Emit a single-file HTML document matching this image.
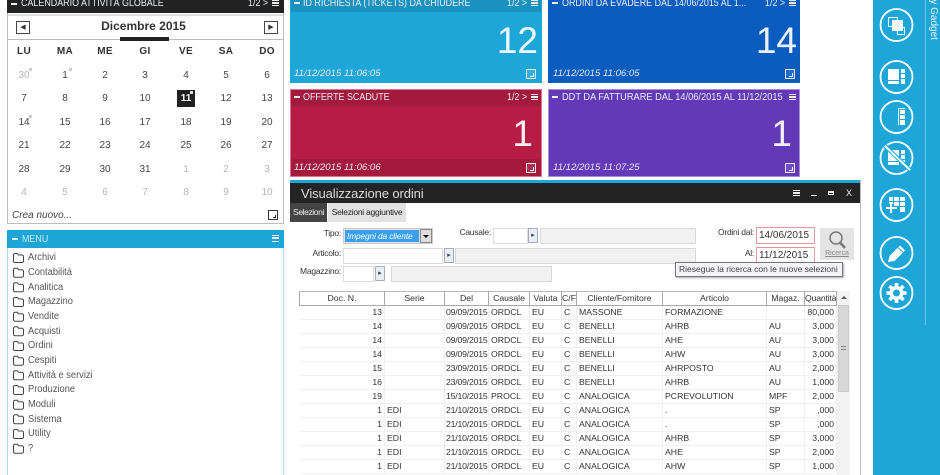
<!DOCTYPE html>
<html><head><meta charset="utf-8"><style>
html,body{margin:0;padding:0;width:940px;height:475px;overflow:hidden;background:#fff;font-family:"Liberation Sans",sans-serif;color:#333}
div,span{position:absolute;box-sizing:border-box;white-space:nowrap}
#root{left:0;top:0;width:940px;height:475px;overflow:hidden;background:#fff}
.h{font-size:10.5px;color:#e6eef5;line-height:12px;transform:scaleX(.85);transform-origin:0 50%}
.m{width:6px;height:2px;background:#eee}
.ham{width:7px;height:6px;border-top:1px solid #eee;border-bottom:1px solid #eee;background:linear-gradient(#eee,#eee) 0 1px/7px 2px no-repeat}
.ts{font-size:9.6px;font-style:italic;color:#e4e9f2;line-height:12px}
.num{font-size:37px;color:rgba(255,255,255,.92);line-height:40px;text-align:right;font-weight:400}
.exp{width:10px;height:10px;border:1px solid #e8e8e8;background:rgba(255,255,255,.1)}
.exp:after{content:"";position:absolute;right:1px;bottom:1px;width:3px;height:3px;border-right:1px solid #fff;border-bottom:1px solid #fff}
.dw{font-size:10px;font-weight:bold;color:#333;width:30px;text-align:center;top:46px;line-height:12px;letter-spacing:.3px}
.d{font-size:10px;color:#444;width:30px;text-align:center;line-height:12px}
.g{color:#b5b5b5}
.mi{left:28px;font-size:10px;line-height:12px;color:#555;transform:scaleX(.93);transform-origin:0 50%}
.lb{font-size:8.5px;line-height:11px;color:#333;text-align:right;letter-spacing:-.25px}
.in{background:#fff;border:1px solid #dcdcdc;height:16px}
.ro{background:#f1f1f1;border:1px solid #d8d8d8;height:16px}
.ar{width:10px;height:15px;background:#e8eef6;border:1px solid #aab;font-size:7px;line-height:13px;text-align:center;color:#345}
table{position:absolute;left:299px;top:291px;border-collapse:collapse;table-layout:fixed;width:537px;font-size:8.7px;color:#333}
th{font-weight:normal;height:13px;padding:0;border:1px solid #aaa;border-top:1px solid #bbb;background:#fff;text-align:center;line-height:11px;overflow:hidden;white-space:nowrap}
th:last-child{letter-spacing:-.2px}
td{height:13px;padding:0 2px;border-bottom:1px solid #f0f0f0;border-right:1px solid #f0f0f0;line-height:11px;overflow:hidden;white-space:nowrap}
td:nth-child(3){padding:0 0 0 1px;letter-spacing:-.2px}
td.r{text-align:right}
svg{position:absolute}
</style></head><body><div id="root">

<!-- calendar -->
<div style="left:7px;top:0;width:277px;height:224px;border:1px solid #bdbdbd;background:#fff"></div>
<div style="left:7px;top:0;width:277px;height:13px;background:#222"></div>
<div style="left:8px;top:14px;width:275px;height:2px;background:#ddd"></div>
<div class="m" style="left:11px;top:3px"></div>
<div class="h" style="left:21px;top:-3px">CALENDARIO ATTIVITÀ GLOBALE</div>
<div class="h" style="left:248px;top:-3px">1/2 &gt;</div>
<div class="ham" style="left:272px;top:0"></div>
<div style="left:16px;top:21px;width:14px;height:13px;border:1px solid #444;font-size:7px;line-height:11px;text-align:center">◀</div>
<div style="left:264px;top:21px;width:14px;height:13px;border:1px solid #444;font-size:7px;line-height:11px;text-align:center">▶</div>
<div style="left:90px;top:19px;width:107px;text-align:center;font-size:12px;font-weight:bold;color:#333;line-height:15px">Dicembre 2015</div>
<div style="left:8px;top:39px;width:275px;height:1px;background:#bbb"></div>
<div style="left:120px;top:37px;width:49px;height:4px;background:#222"></div>

<div class="dw" style="left:9px">LU</div><div class="dw" style="left:50px">MA</div><div class="dw" style="left:90px">ME</div><div class="dw" style="left:130px">GI</div><div class="dw" style="left:171px">VE</div><div class="dw" style="left:211px">SA</div><div class="dw" style="left:252px">DO</div>

<div class="d g" style="left:9px;top:70px">30</div><div class="d" style="left:50px;top:70px">1</div><div class="d" style="left:90px;top:70px">2</div><div class="d" style="left:130px;top:70px">3</div><div class="d" style="left:171px;top:70px">4</div><div class="d" style="left:211px;top:70px">5</div><div class="d" style="left:252px;top:70px">6</div>
<div style="left:29px;top:68px;width:3px;height:3px;background:#ccc"></div>
<div style="left:69px;top:68px;width:3px;height:3px;background:#ccc"></div>

<div class="d" style="left:9px;top:93px">7</div><div class="d" style="left:50px;top:93px">8</div><div class="d" style="left:90px;top:93px">9</div><div class="d" style="left:130px;top:93px">10</div>
<div style="left:177px;top:90px;width:18px;height:17px;background:#222"></div>
<div class="d" style="left:171px;top:93px;color:#fff;font-weight:bold">11</div>
<div style="left:190px;top:91px;width:3px;height:3px;background:#ddd"></div>
<div class="d" style="left:211px;top:93px">12</div><div class="d" style="left:252px;top:93px">13</div>

<div class="d" style="left:9px;top:117px">14</div><div class="d" style="left:50px;top:117px">15</div><div class="d" style="left:90px;top:117px">16</div><div class="d" style="left:130px;top:117px">17</div><div class="d" style="left:171px;top:117px">18</div><div class="d" style="left:211px;top:117px">19</div><div class="d" style="left:252px;top:117px">20</div>
<div style="left:29px;top:115px;width:3px;height:3px;background:#ccc"></div>

<div class="d" style="left:9px;top:140px">21</div><div class="d" style="left:50px;top:140px">22</div><div class="d" style="left:90px;top:140px">23</div><div class="d" style="left:130px;top:140px">24</div><div class="d" style="left:171px;top:140px">25</div><div class="d" style="left:211px;top:140px">26</div><div class="d" style="left:252px;top:140px">27</div>

<div class="d" style="left:9px;top:164px">28</div><div class="d" style="left:50px;top:164px">29</div><div class="d" style="left:90px;top:164px">30</div><div class="d" style="left:130px;top:164px">31</div><div class="d g" style="left:171px;top:164px">1</div><div class="d g" style="left:211px;top:164px">2</div><div class="d g" style="left:252px;top:164px">3</div>

<div class="d g" style="left:9px;top:187px">4</div><div class="d g" style="left:50px;top:187px">5</div><div class="d g" style="left:90px;top:187px">6</div><div class="d g" style="left:130px;top:187px">7</div><div class="d g" style="left:171px;top:187px">8</div><div class="d g" style="left:211px;top:187px">9</div><div class="d g" style="left:252px;top:187px">10</div>

<div style="left:12px;top:210px;font-size:10px;font-style:italic;color:#444;line-height:12px">Crea nuovo...</div>
<div style="left:268px;top:210px;width:10px;height:10px;border:1px solid #333"><div style="right:1px;bottom:1px;width:3px;height:3px;border-right:1px solid #222;border-bottom:1px solid #222"></div></div>

<!-- menu -->
<div style="left:7px;top:230px;width:277px;height:245px;border:1px solid #a9dcef;border-bottom:0;background:#fff"></div>
<div style="left:7px;top:230px;width:277px;height:18px;background:#1da5d8"></div>
<div class="m" style="left:12px;top:238px"></div>
<div class="h" style="left:22px;top:233px;color:#c6e8f5">MENU</div>
<div class="ham" style="left:272px;top:235px;height:7px"></div>

<svg style="left:12px;top:252px" width="14" height="215" fill="none" stroke="#444" stroke-width="1">
<defs><path id="f" d="M1.5 9.5V2.5L2.5 1.5H5.5L6.5 3H10.5L11.5 4V9.5L10.5 10.5H2.5Z"/></defs>
<use href="#f" y="0"/><use href="#f" y="14.7"/><use href="#f" y="29.3"/><use href="#f" y="44"/><use href="#f" y="58.7"/><use href="#f" y="73.3"/><use href="#f" y="88"/><use href="#f" y="102.7"/><use href="#f" y="117.3"/><use href="#f" y="132"/><use href="#f" y="146.7"/><use href="#f" y="161.3"/><use href="#f" y="176"/><use href="#f" y="190.7"/>
</svg>
<div class="mi" style="top:252px">Archivi</div>
<div class="mi" style="top:267px">Contabilità</div>
<div class="mi" style="top:282px">Analitica</div>
<div class="mi" style="top:296px">Magazzino</div>
<div class="mi" style="top:311px">Vendite</div>
<div class="mi" style="top:326px">Acquisti</div>
<div class="mi" style="top:340px">Ordini</div>
<div class="mi" style="top:355px">Cespiti</div>
<div class="mi" style="top:370px">Attività e servizi</div>
<div class="mi" style="top:384px">Produzione</div>
<div class="mi" style="top:399px">Moduli</div>
<div class="mi" style="top:414px">Sistema</div>
<div class="mi" style="top:428px">Utility</div>
<div class="mi" style="top:443px">?</div>

<!-- tiles -->
<div style="left:290px;top:0;width:252px;height:83px;background:#1fa6d9"></div>
<div style="left:291px;top:0;width:250px;height:12px;background:#1b91bf"></div>
<div class="m" style="left:294px;top:2px"></div>
<div class="h" style="left:303px;top:-3px">ID RICHIESTA (TICKETS) DA CHIUDERE</div>
<div class="h" style="left:507px;top:-3px">1/2 &gt;</div>
<div class="ham" style="left:531px;top:0"></div>
<div class="num" style="left:440px;top:21px;width:98px">12</div>
<div class="ts" style="left:294px;top:68px">11/12/2015 11:06:05</div>
<div class="exp" style="left:526px;top:69px"></div>

<div style="left:548px;top:0;width:252px;height:83px;background:#0a5cbf"></div>
<div class="m" style="left:552px;top:2px"></div>
<div class="h" style="left:562px;top:-3px">ORDINI DA EVADERE DAL 14/06/2015 AL 1...</div>
<div class="h" style="left:765px;top:-3px">1/2 &gt;</div>
<div class="ham" style="left:789px;top:0"></div>
<div class="num" style="left:698px;top:21px;width:99px">14</div>
<div class="ts" style="left:553px;top:68px">11/12/2015 11:06:05</div>
<div class="exp" style="left:785px;top:69px"></div>

<div style="left:290px;top:89px;width:252px;height:88px;background:#b71c44;border:1px solid #d8769a"></div>
<div style="left:291px;top:90px;width:250px;height:16px;background:#a31a3d"></div>
<div style="left:291px;top:159px;width:250px;height:17px;background:#a31a3d"></div>
<div class="m" style="left:294px;top:96px"></div>
<div class="h" style="left:303px;top:91px">OFFERTE SCADUTE</div>
<div class="h" style="left:507px;top:91px">1/2 &gt;</div>
<div class="ham" style="left:531px;top:94px"></div>
<div class="num" style="left:435px;top:114px;width:98px">1</div>
<div class="ts" style="left:294px;top:162px">11/12/2015 11:06:06</div>
<div class="exp" style="left:526px;top:163px"></div>

<div style="left:548px;top:89px;width:252px;height:88px;background:#6339b8;border:1px solid #a58fd8"></div>
<div class="m" style="left:552px;top:96px"></div>
<div class="h" style="left:562px;top:91px;transform:scaleX(.88)">DDT DA FATTURARE DAL 14/06/2015 AL 11/12/2015</div>
<div class="ham" style="left:789px;top:94px"></div>
<div class="num" style="left:696px;top:114px;width:96px">1</div>
<div class="ts" style="left:553px;top:162px">11/12/2015 11:07:25</div>
<div class="exp" style="left:785px;top:163px"></div>

<!-- window -->
<div style="left:290px;top:180px;width:571px;height:295px;background:#fff;border-right:1px solid #bbb"></div>
<div style="left:290px;top:180px;width:570px;height:3px;background:#1fa6d9"></div>
<div style="left:290px;top:183px;width:570px;height:20px;background:#242424"></div>
<div style="left:301px;top:185px;font-size:13px;color:#ddd;line-height:17px;letter-spacing:-.1px">Visualizzazione ordini</div>
<div class="ham" style="left:793px;top:190px"></div>
<div style="left:811px;top:195px;width:6px;height:1px;background:#eee"></div>
<div style="left:828px;top:191px;width:6px;height:4px;border:1px solid #eee;border-top-width:2px"></div>
<div style="left:846px;top:187px;font-size:9px;color:#eee;line-height:12px">X</div>

<div style="left:290px;top:203px;width:37px;height:19px;background:#444;color:#eee;font-size:8.5px;line-height:19px;text-align:center;letter-spacing:-.4px">Selezioni</div>
<div style="left:328px;top:203px;width:78px;height:19px;background:#e2e2e2;color:#222;font-size:8.5px;line-height:19px;text-align:center;letter-spacing:-.25px">Selezioni aggiuntive</div>

<div class="lb" style="left:300px;top:228px;width:41px">Tipo:</div>
<div style="left:343px;top:228px;width:90px;height:16px;background:#e4e4e4;border:1px solid #ccc"></div>
<div style="left:345px;top:230px;width:74px;height:12px;background:#3a9ff0;color:#fff;font-size:8.3px;font-style:italic;line-height:12px;padding-left:2px;letter-spacing:-.1px">Impegni da cliente</div>
<div style="left:420px;top:229px;width:12px;height:14px;background:#ddd;border:1px solid #888"></div>
<div style="left:423px;top:235px;width:0;height:0;border:3px solid transparent;border-top:3px solid #111;border-bottom:0"></div>

<div class="lb" style="left:450px;top:227px;width:41px">Causale:</div>
<div class="in" style="left:493px;top:228px;width:35px"></div>
<div class="ar" style="left:528px;top:228px">▸</div>
<div class="ro" style="left:540px;top:228px;width:156px"></div>

<div class="lb" style="left:300px;top:248px;width:41px">Articolo:</div>
<div class="in" style="left:343px;top:248px;width:100px"></div>
<div class="ar" style="left:444px;top:248px">▸</div>
<div class="ro" style="left:455px;top:248px;width:241px"></div>

<div class="lb" style="left:295px;top:266px;width:46px">Magazzino:</div>
<div class="in" style="left:343px;top:266px;width:31px"></div>
<div class="ar" style="left:375px;top:266px">▸</div>
<div class="ro" style="left:391px;top:266px;width:161px"></div>

<div class="lb" style="left:700px;top:227px;width:54px">Ordini dal:</div>
<div style="left:756px;top:227px;width:59px;height:17px;border:1px solid #e39a9a;font-size:10px;line-height:15px;padding-left:2px;color:#333">14/06/2015</div>
<div class="lb" style="left:700px;top:248px;width:54px">Al:</div>
<div style="left:756px;top:247px;width:59px;height:17px;border:1px solid #e39a9a;font-size:10px;line-height:15px;padding-left:2px;color:#333">11/12/2015</div>

<div style="left:820px;top:228px;width:34px;height:32px;background:#e4e4e4"></div>
<svg style="left:827px;top:230px" width="20" height="20" fill="none" stroke="#777"><circle cx="9" cy="8" r="6" stroke-width="1.5"/><path d="M13 12.5L18 18" stroke-width="2.5"/></svg>
<div style="left:820px;top:249px;width:34px;text-align:center;font-size:7px;color:#888;line-height:10px;text-decoration:underline">Ricerca</div>

<div style="left:675px;top:262px;width:168px;height:15px;background:#f4f4f8;border:1px solid #777;box-shadow:1px 1px 2px #aaa;font-size:8.5px;line-height:13px;color:#444;padding-left:3px">Riesegue la ricerca con le nuove selezioni</div>

<!-- grid -->
<table><colgroup><col style="width:85px"><col style="width:60px"><col style="width:44px"><col style="width:41px"><col style="width:32px"><col style="width:15px"><col style="width:86px"><col style="width:104px"><col style="width:38px"><col style="width:32px"></colgroup>
<tr><th>Doc. N.</th><th>Serie</th><th>Del</th><th>Causale</th><th>Valuta</th><th>C/F</th><th>Cliente/Fornitore</th><th>Articolo</th><th>Magaz.</th><th>Quantità</th></tr>
<tr><td class="r">13</td><td></td><td>09/09/2015</td><td>ORDCL</td><td>EU</td><td>C</td><td>MASSONE</td><td>FORMAZIONE</td><td></td><td class="r">80,000</td></tr>
<tr><td class="r">14</td><td></td><td>09/09/2015</td><td>ORDCL</td><td>EU</td><td>C</td><td>BENELLI</td><td>AHRB</td><td>AU</td><td class="r">3,000</td></tr>
<tr><td class="r">14</td><td></td><td>09/09/2015</td><td>ORDCL</td><td>EU</td><td>C</td><td>BENELLI</td><td>AHE</td><td>AU</td><td class="r">3,000</td></tr>
<tr><td class="r">14</td><td></td><td>09/09/2015</td><td>ORDCL</td><td>EU</td><td>C</td><td>BENELLI</td><td>AHW</td><td>AU</td><td class="r">3,000</td></tr>
<tr><td class="r">15</td><td></td><td>23/09/2015</td><td>ORDCL</td><td>EU</td><td>C</td><td>BENELLI</td><td>AHRPOSTO</td><td>AU</td><td class="r">2,000</td></tr>
<tr><td class="r">16</td><td></td><td>23/09/2015</td><td>ORDCL</td><td>EU</td><td>C</td><td>BENELLI</td><td>AHRB</td><td>AU</td><td class="r">1,000</td></tr>
<tr><td class="r">19</td><td></td><td>15/10/2015</td><td>PROCL</td><td>EU</td><td>C</td><td>ANALOGICA</td><td>PCREVOLUTION</td><td>MPF</td><td class="r">2,000</td></tr>
<tr><td class="r">1</td><td>EDI</td><td>21/10/2015</td><td>ORDCL</td><td>EU</td><td>C</td><td>ANALOGICA</td><td>.</td><td>SP</td><td class="r">,000</td></tr>
<tr><td class="r">1</td><td>EDI</td><td>21/10/2015</td><td>ORDCL</td><td>EU</td><td>C</td><td>ANALOGICA</td><td>.</td><td>SP</td><td class="r">,000</td></tr>
<tr><td class="r">1</td><td>EDI</td><td>21/10/2015</td><td>ORDCL</td><td>EU</td><td>C</td><td>ANALOGICA</td><td>AHRB</td><td>SP</td><td class="r">3,000</td></tr>
<tr><td class="r">1</td><td>EDI</td><td>21/10/2015</td><td>ORDCL</td><td>EU</td><td>C</td><td>ANALOGICA</td><td>AHE</td><td>SP</td><td class="r">2,000</td></tr>
<tr><td class="r">1</td><td>EDI</td><td>21/10/2015</td><td>ORDCL</td><td>EU</td><td>C</td><td>ANALOGICA</td><td>AHW</td><td>SP</td><td class="r">1,000</td></tr>
</table>
<div style="left:837px;top:291px;width:13px;height:184px;background:#f3f3f3"></div>
<div style="left:838px;top:305px;width:11px;height:87px;background:#d8d8d8;border:1px solid #ccc"></div>
<div style="left:841px;top:346px;width:5px;height:4px;border-top:1px solid #888;border-bottom:1px solid #888"></div>
<div style="left:841px;top:296px;width:0;height:0;border:3px solid transparent;border-bottom:3px solid #555;border-top:0"></div>

<!-- sidebar -->
<div style="left:873px;top:0;width:67px;height:475px;background:#1fa6d9"></div>
<div style="left:925px;top:0;width:1px;height:325px;background:#6cc4e6"></div>
<div style="left:927px;top:-21px;font-size:10px;line-height:12px;color:#e8f5fb;transform:rotate(90deg);transform-origin:0 100%;">My Gadget</div>
<svg style="left:873px;top:0" width="50" height="320" fill="none" stroke="#fff" stroke-width="1.8">
<circle cx="23.5" cy="25" r="16"/><circle cx="23.5" cy="77" r="16"/><circle cx="23.5" cy="117" r="16"/><circle cx="23.5" cy="158" r="16"/><circle cx="23.5" cy="205" r="16"/><circle cx="23.5" cy="253" r="16"/><circle cx="23.5" cy="293" r="16"/>
<!-- icon 1: stacked squares -->
<rect x="15.5" y="17.5" width="9" height="9" stroke-width="1"/><rect x="24.5" y="27.5" width="7" height="7" stroke-width="1"/><rect x="19" y="20" width="11" height="11" fill="#fff" stroke="none"/>
<!-- icon 2: grid with large tile -->
<g fill="#fff" stroke="none"><rect x="15" y="69" width="11" height="11"/><rect x="15" y="81" width="11" height="3"/><rect x="28" y="69" width="4" height="4"/><rect x="28" y="74" width="4" height="4"/><rect x="28" y="79" width="4" height="5"/></g>
<!-- icon 3: column -->
<g fill="#fff" stroke="none"><rect x="25" y="108" width="1" height="17"/><rect x="25" y="108" width="7" height="1"/><rect x="27" y="110" width="5" height="4"/><rect x="27" y="115" width="5" height="4"/><rect x="27" y="120" width="5" height="5"/></g>
<!-- icon 4: grid crossed -->
<g fill="#fff" stroke="none"><rect x="15" y="150" width="11" height="11"/><rect x="15" y="162" width="11" height="3"/><rect x="28" y="150" width="4" height="4"/><rect x="28" y="155" width="4" height="4"/><rect x="28" y="160" width="4" height="5"/></g>
<path d="M12 146L37 170" stroke="#1fa6d9" stroke-width="4"/>
<path d="M12 146L37 170" stroke-width="2"/>
<!-- icon 5: grid plus -->
<g fill="#fff" stroke="none"><rect x="16" y="197" width="4" height="4"/><rect x="21" y="197" width="5" height="4"/><rect x="27" y="197" width="5" height="4"/><rect x="21" y="202" width="5" height="4"/><rect x="27" y="202" width="5" height="4"/><rect x="27" y="207" width="5" height="5"/><rect x="16" y="202" width="4" height="2"/><rect x="13" y="207" width="11" height="2"/><rect x="17" y="203" width="2" height="10"/></g>
<!-- icon 6: pencil -->
<path d="M15 262L16.5 256L27 245.5L32 250.5L21.5 261Z" fill="#fff" stroke="none"/>
<path d="M25 247.5L30 252.5" stroke="#1fa6d9" stroke-width="1"/>
<!-- icon 7: gear -->
<g stroke-width="3.6"><path d="M23.5 283V303M13.5 293H33.5M16.5 286L30.5 300M30.5 286L16.5 300"/></g>
<circle cx="23.5" cy="293" r="7" fill="#fff" stroke="none"/>
<circle cx="23.5" cy="293" r="3.5" fill="#1fa6d9" stroke="none"/>
</svg>
</div></body></html>
